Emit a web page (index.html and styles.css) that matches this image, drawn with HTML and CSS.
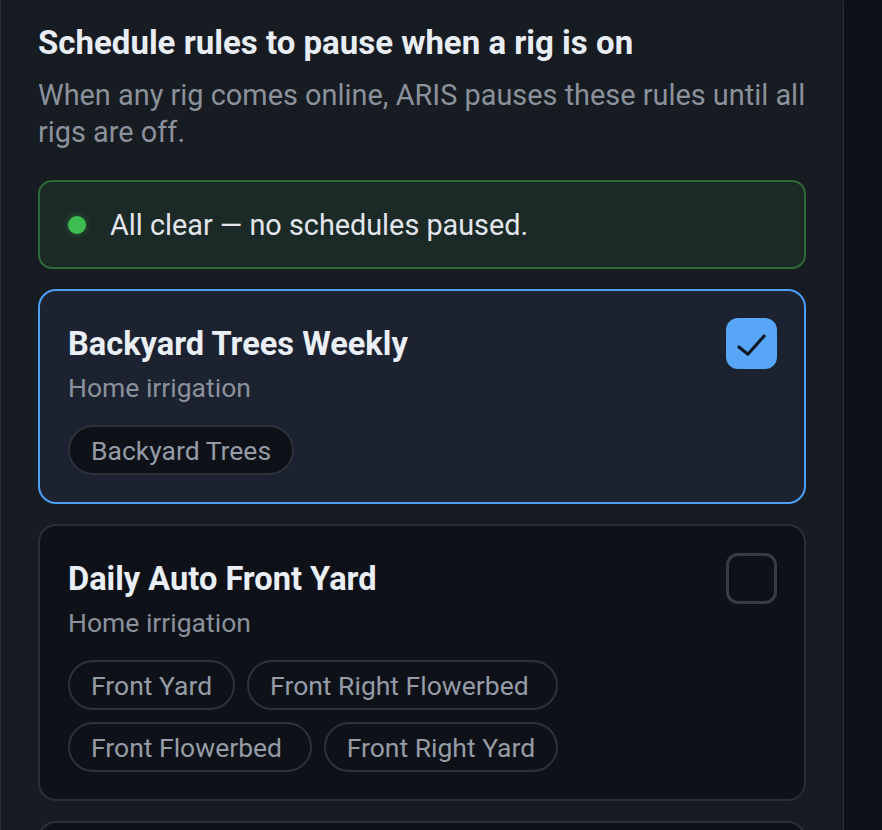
FILE: index.html
```html
<!DOCTYPE html>
<html lang="en">

<head>
    <meta charset="UTF-8">
    <meta name="viewport" content="width=device-width, initial-scale=1.0">
    <title>Pause rules</title>
    <link rel="stylesheet" href="styles.css">
</head>

<body>
    <section class="panel">
        <h2 class="panel-title">Schedule rules to pause when a rig is on</h2>
        <p class="panel-desc">When any rig comes online, ARIS pauses these rules until all rigs are off.</p>

        <div class="status">
            <span class="status-dot"></span>
            <span class="status-text">All clear — no schedules paused.</span>
        </div>

        <div class="rule checked">
            <div class="rule-head">
                <h3 class="rule-name">Backyard Trees Weekly</h3>
                <span class="check">
                    <svg viewBox="0 0 24 24" width="50" height="50">
                        <polyline points="6.2,13.9 10.5,17.4 18.3,8.6" fill="none" stroke="#111826"
                            stroke-width="1.5" stroke-linecap="round" stroke-linejoin="round" />
                    </svg>
                </span>
            </div>
            <div class="rule-sub">Home irrigation</div>
            <div class="zones">
                <span class="zone">Backyard Trees</span>
            </div>
        </div>

        <div class="rule">
            <div class="rule-head">
                <h3 class="rule-name">Daily Auto Front Yard</h3>
                <span class="check"></span>
            </div>
            <div class="rule-sub">Home irrigation</div>
            <div class="zones">
                <span class="zone">Front Yard</span>
                <span class="zone">Front Right Flowerbed&nbsp;</span>
                <span class="zone">Front Flowerbed&nbsp;</span>
                <span class="zone">Front Right Yard</span>
            </div>
        </div>

        <div class="rule">
            <div class="rule-head">
                <h3 class="rule-name">Evening Side Beds</h3>
                <span class="check"></span>
            </div>
            <div class="rule-sub">Home irrigation</div>
            <div class="zones">
                <span class="zone">Side Beds</span>
            </div>
        </div>
    </section>
</body>

</html>
```
FILE: styles.css
```css
* {
    margin: 0;
    padding: 0;
    box-sizing: border-box;
}

body {
    background-color: #0d1016;
    font-family: Roboto, "Liberation Sans", sans-serif;
    width: 882px;
    height: 830px;
    overflow: hidden;
}

.panel {
    width: 844px;
    margin-top: -14px;
    padding: 34px 37px 40px 37px;
    background-color: #171b22;
    border: 1px solid #2a2e36;
    border-radius: 0 18px 18px 0;
}

.panel-title {
    font-size: 33px;
    font-weight: 700;
    line-height: 44px;
    color: #e9edf4;
}

.panel-desc {
    margin-top: 12px;
    font-size: 28.9px;
    line-height: 37px;
    color: #8b919b;
}

.status {
    margin-top: 29px;
    height: 89px;
    display: flex;
    align-items: center;
    gap: 24px;
    padding: 0 28px;
    background-color: #1c2a27;
    border: 2px solid #2d6a39;
    border-radius: 14px;
}

.status-dot {
    width: 18px;
    height: 18px;
    border-radius: 50%;
    background-color: #3fbd50;
    box-shadow: 0 0 6px rgba(63, 189, 80, 0.45);
}

.status-text {
    font-size: 28.8px;
    color: #e2e6ec;
}

.rule {
    margin-top: 20px;
    padding: 27px 27px 27px 28px;
    background-color: #0e1118;
    border: 2px solid #2a2f38;
    border-radius: 18px;
}

.rule.checked {
    background-color: #1c2230;
    border-color: #4d9ef5;
}

.rule-head {
    display: flex;
    align-items: center;
    justify-content: space-between;
}

.rule-name {
    font-size: 32.6px;
    font-weight: 700;
    color: #eaeef5;
}

.check {
    width: 51px;
    height: 51px;
    border: 3px solid #363b44;
    border-radius: 12px;
}

.checked .check {
    border: none;
    background-color: #58a6f8;
}

.check svg {
    display: block;
}

.rule-sub {
    margin-top: 1px;
    font-size: 26.5px;
    line-height: 36px;
    color: #8b919b;
}

.zones {
    margin-top: 19px;
    display: flex;
    flex-wrap: wrap;
    gap: 12px;
}

.zone {
    height: 50px;
    display: flex;
    align-items: center;
    padding: 0 21px;
    background-color: #0e1118;
    border: 2px solid #2c313a;
    border-radius: 25px;
    font-size: 26.5px;
    color: #959ca6;
}
```
